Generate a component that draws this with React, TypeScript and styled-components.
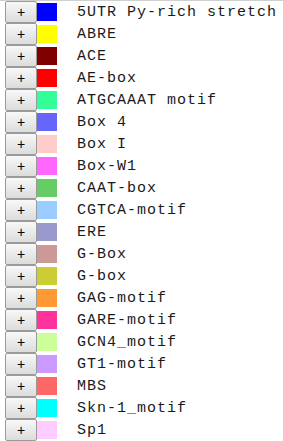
import styled, { createGlobalStyle } from 'styled-components';

const GlobalStyle = createGlobalStyle`
  body {
    margin: 0;
    background: #ffffff;
  }
`;

const motifs: [string, string][] = [
  ['5UTR Py-rich stretch', '#0000ff'],
  ['ABRE', '#ffff00'],
  ['ACE', '#800000'],
  ['AE-box', '#ff0000'],
  ['ATGCAAAT motif', '#33ff99'],
  ['Box 4', '#6666ff'],
  ['Box I', '#ffcccc'],
  ['Box-W1', '#ff66ff'],
  ['CAAT-box', '#66cc66'],
  ['CGTCA-motif', '#99ccff'],
  ['ERE', '#9999cc'],
  ['G-Box', '#cc9999'],
  ['G-box', '#cccc33'],
  ['GAG-motif', '#ff9933'],
  ['GARE-motif', '#ff3399'],
  ['GCN4_motif', '#ccff99'],
  ['GT1-motif', '#cc99ff'],
  ['MBS', '#ff6666'],
  ['Skn-1_motif', '#00ffff'],
  ['Sp1', '#ffccff'],
];

const List = styled.div`
  border-top: 1px solid #d0d0d0;
  width: 283px;
`;

const Row = styled.div`
  display: flex;
  align-items: center;
  height: 22px;
  padding-left: 5px;
`;

const AddButton = styled.button`
  width: 32px;
  height: 22px;
  padding: 0;
  border: 1px solid #9a9a9a;
  border-radius: 2px;
  background: linear-gradient(#f8f8f8, #dcdcdc);
  font-family: 'Liberation Sans', Arial, sans-serif;
  font-size: 14px;
  line-height: 18px;
  color: #000000;
  cursor: pointer;
`;

const Swatch = styled.div<{ $color: string }>`
  width: 20px;
  height: 18px;
  background: ${(p) => p.$color};
`;

const Label = styled.span`
  margin-left: 20px;
  font-family: 'Liberation Mono', 'Courier New', monospace;
  font-size: 15px;
  letter-spacing: 1px;
  color: #1a1a1a;
  white-space: pre;
`;

const App = () => {
  return (
    <>
      <GlobalStyle />
      <List>
        {motifs.map(([name, color]) => (
          <Row key={name}>
            <AddButton>+</AddButton>
            <Swatch $color={color} />
            <Label>{name}</Label>
          </Row>
        ))}
      </List>
    </>
  );
};

export default App;
